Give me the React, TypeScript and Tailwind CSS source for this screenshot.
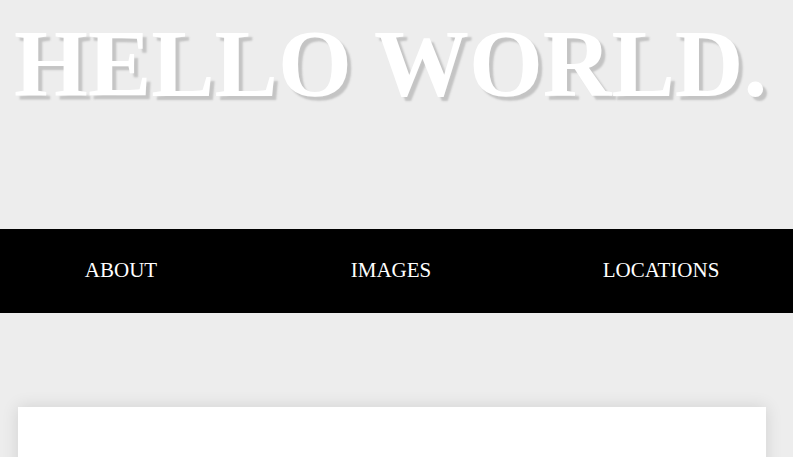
export default function App() {
  const links = ['ABOUT', 'IMAGES', 'LOCATIONS'];

  return (
    <div className="min-h-screen bg-[#ededed] overflow-hidden font-['Liberation_Serif',serif]">
      {/* Title */}
      <header className="h-[229px] pt-[10px]">
        <h1 className="pl-[14px] text-[95px] leading-[109px] font-bold text-white whitespace-nowrap [text-shadow:4px_4px_2px_#c4c4c4]">
          HELLO WORLD.
        </h1>
      </header>

      {/* Nav */}
      <nav className="h-[84px] bg-black overflow-hidden">
        <ul className="grid h-full grid-cols-[256px_270px_270px] items-center text-[21px] text-white">
          {links.map((link, i) => (
            <li key={link} className={i === 0 ? 'pr-[14px] text-center' : 'text-center'}>
              {link}
            </li>
          ))}
        </ul>
      </nav>

      {/* Content card */}
      <main className="pl-[18px] pr-[27px] pt-[94px]">
        <div className="h-[120px] bg-white shadow-[0_0_16px_rgba(0,0,0,0.12)]" />
      </main>
    </div>
  );
}
